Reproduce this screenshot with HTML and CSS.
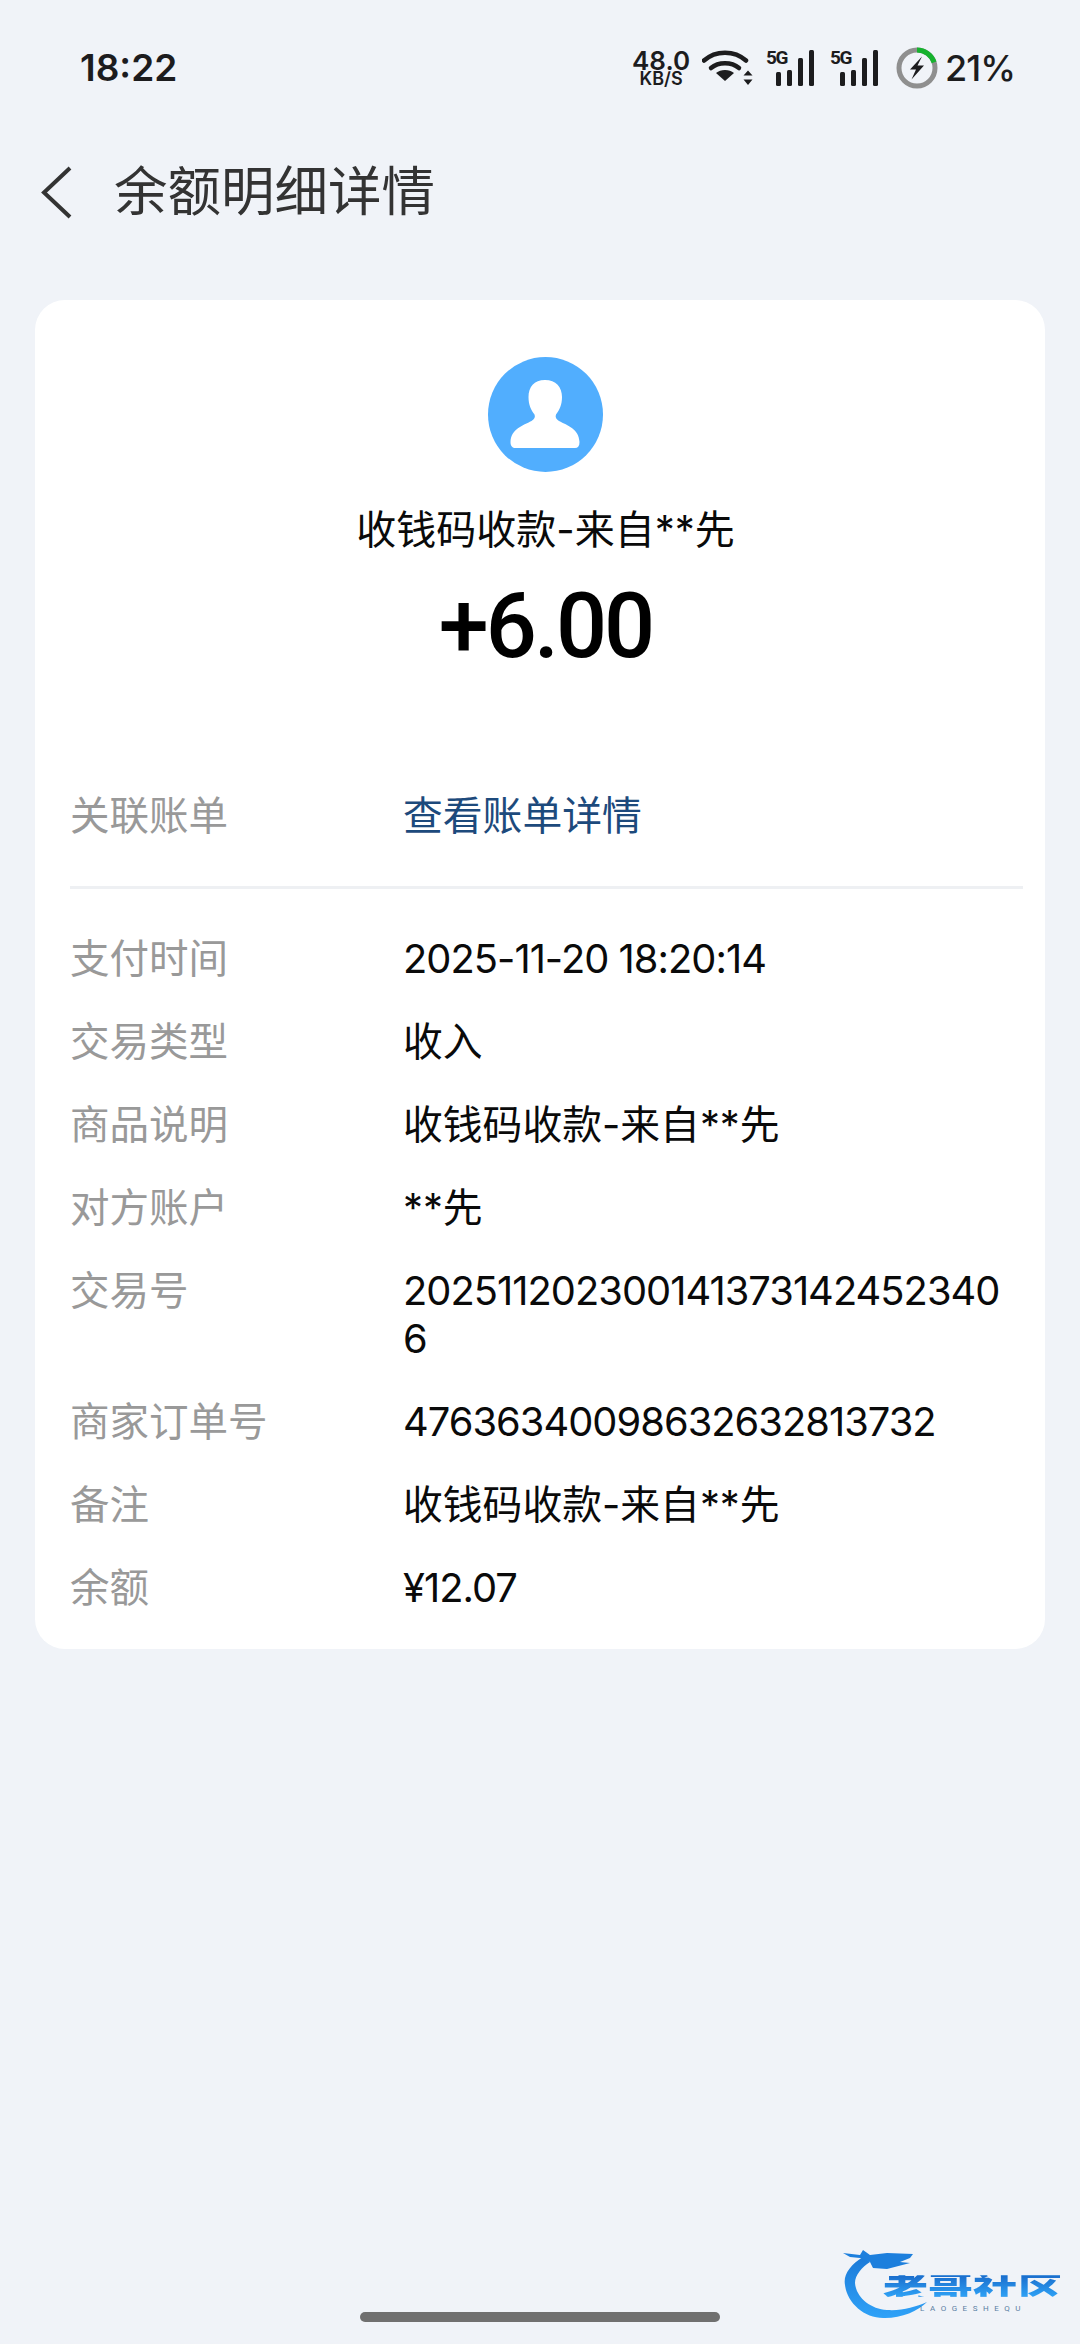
FILE: index.html
```html
<!DOCTYPE html>
<html lang="zh-CN">
<head>
<meta charset="utf-8">
<title>余额明细详情</title>
<link rel="stylesheet" href="styles.css">
</head>
<body>
<div class="page">
  <header class="status">
    <span class="time">18:22</span>
    <div class="status-right">
      <div class="speed"><span class="speed-num">48.0</span><span class="speed-unit">KB/S</span></div>
      <svg class="wifi" width="52" height="38" viewBox="0 0 52 38">
        <path d="M2 11.500C13.500 1 32.500 1 44 11.500" fill="none" stroke="#1c1c1e" stroke-width="4.500" stroke-linecap="round"/>
        <path d="M9 19C16.500 12.500 29.500 12.500 37 19" fill="none" stroke="#1c1c1e" stroke-width="4.500" stroke-linecap="round"/>
        <path d="M23 21C26.500 21 29.500 22 32 24L23 32L14 24C16.500 22 19.500 21 23 21Z" fill="#1c1c1e"/>
        <path d="M46 21.500L50.500 26.500H41.500ZM46 36L41.500 30.500H50.500Z" fill="#1c1c1e"/>
      </svg>
      <div class="signal">
        <span class="net">5G</span>
        <span class="bar bar1"></span><span class="bar bar2"></span><span class="bar bar3"></span><span class="bar bar4"></span>
      </div>
      <div class="signal">
        <span class="net">5G</span>
        <span class="bar bar1"></span><span class="bar bar2"></span><span class="bar bar3"></span><span class="bar bar4"></span>
      </div>
      <svg class="battery" width="42" height="42" viewBox="0 0 42 42">
        <circle cx="21" cy="21" r="18" fill="none" stroke="#8f8f8f" stroke-width="5"/>
        <path d="M21 3A18 18 0 0 1 38.100 15.400" fill="none" stroke="#16b22e" stroke-width="5"/>
        <path d="M26 9.500L14 22.500H20L15.500 32.500L28 18.500H21.500Z" fill="#1c1c1e"/>
      </svg>
      <span class="pct">21%</span>
    </div>
  </header>

  <nav class="nav">
    <svg class="back" width="31" height="53" viewBox="0 0 31 53">
      <path d="M29 2L3 26.500L29 51" fill="none" stroke="#333" stroke-width="4"/>
    </svg>
    <h1 class="nav-title">余额明细详情</h1>
  </nav>

  <main class="card">
    <section class="summary">
      <svg class="avatar" width="115" height="115" viewBox="0 0 115 115">
        <circle cx="57.500" cy="57.500" r="57.500" fill="#51aefe"/>
        <path d="M57 23C46 23 40.500 30 40.500 40C40.500 48 43 53 46.500 57.500C47.500 60 46.500 62 43.500 64C35 68.500 23 72 22.500 85C22.500 89 24.500 91 27.500 91H87C90 91 91.500 89 91.500 85C91 72 79.500 68.500 71 64C68 62 67 60 68 57.500C71.500 53 74 48 74 40C74 30 68 23 57 23Z" fill="#fff"/>
      </svg>
      <div class="summary-title">收钱码收款-来自**先</div>
      <div class="amount">+6.00</div>
    </section>

    <div class="row row-link">
      <span class="label">关联账单</span>
      <a class="value link">查看账单详情</a>
    </div>
    <hr class="divider">
    <div class="rows">
      <div class="row"><span class="label">支付时间</span><span class="value num">2025-11-20 18:20:14</span></div>
      <div class="row"><span class="label">交易类型</span><span class="value">收入</span></div>
      <div class="row"><span class="label">商品说明</span><span class="value">收钱码收款-来自**先</span></div>
      <div class="row"><span class="label">对方账户</span><span class="value">**先</span></div>
      <div class="row"><span class="label">交易号</span><span class="value num">2025112023001413731424523406</span></div>
      <div class="row"><span class="label">商家订单号</span><span class="value num">47636340098632632813732</span></div>
      <div class="row"><span class="label">备注</span><span class="value">收钱码收款-来自**先</span></div>
      <div class="row"><span class="label">余额</span><span class="value num">¥12.07</span></div>
    </div>
  </main>
</div>

<div class="watermark">
  <svg class="dragon" width="90" height="80" viewBox="0 0 90 80">
    <defs>
      <linearGradient id="dg" x1="0" y1="0" x2="0" y2="1">
        <stop offset="0" stop-color="#1c7ad8"/>
        <stop offset="1" stop-color="#2fa2f8"/>
      </linearGradient>
    </defs>
    <path d="M23 12C10 20 3 30 5 40C7 58 25 74 45 73C62 73 78 66 87 57C75 62 62 66 47 65C30 64 16 52 15 38C15 30 22 22 30 17Z" fill="url(#dg)"/>
    <path d="M3 8L20 10L23 5L30 10L47 8L73 9L70 13L60 17L70 18L47 24L33 23L30 17L20 13L10 12Z" fill="#1d7fdd"/>
  </svg>
  <div class="wm-text">
    <span class="wm-name">老哥社区</span>
    <span class="wm-sub">LAOGESHEQU</span>
  </div>
</div>
<div class="home-bar"></div>
</body>
</html>
```
FILE: styles.css
```css
* { box-sizing: border-box; }
html, body { margin: 0; padding: 0; }
body {
  width: 1080px;
  height: 2344px;
  background: #f0f3f8;
  font-family: "Inter", "Noto Sans CJK SC", sans-serif;
  position: relative;
  overflow: hidden;
}
.page { display: flex; flex-direction: column; }

.status {
  height: 136px;
  padding: 46px 65px 0 80px;
  display: flex;
  justify-content: space-between;
  align-items: flex-start;
  color: #1c1c1e;
}
.time { font-size: 37px; font-weight: 600; line-height: 44px; }
.status-right { display: flex; align-items: center; height: 44px; }
.speed { display: flex; flex-direction: column; align-items: center; width: 58px; font-weight: 600; }
.speed-num { font-size: 26px; line-height: 21px; }
.speed-unit { font-size: 18px; line-height: 15px; }
.wifi { margin-left: 12px; }
.signal { position: relative; width: 48px; height: 36px; margin-left: 12px; display: flex; align-items: flex-end; justify-content: flex-end; gap: 6px; }
.signal + .signal { margin-left: 16px; }
.net { position: absolute; left: 0; top: -1px; font-size: 19px; line-height: 18px; font-weight: 700; letter-spacing: -1.5px; font-family: "Roboto", sans-serif; }
.bar { width: 5px; background: #1c1c1e; border-radius: 1.500px; }
.bar1 { height: 14px; margin-left: 10px; }
.bar2 { height: 16px; }
.bar3 { height: 28px; }
.bar4 { height: 36px; }
.battery { margin-left: 18px; }
.pct { font-size: 36px; font-weight: 500; margin-left: 7px; line-height: 44px; letter-spacing: -1px; }

.nav {
  height: 112px;
  padding-left: 41px;
  display: flex;
  align-items: center;
  gap: 42px;
}
.back { flex: none; }
.nav-title { margin: 0; font-size: 53.500px; font-weight: 400; color: #333; line-height: 70px; }

.card {
  margin: 52px 35px 0;
  width: 1010px;
  height: 1349px;
  background: #fff;
  border-radius: 30px;
  padding: 57px 22px 0 35px;
}
.summary { display: flex; flex-direction: column; align-items: center; padding-right: 2px; }
.avatar { display: block; }
.summary-title { margin-top: 32px; font-size: 40px; line-height: 52px; color: #0a0a0a; }
.amount { margin-top: 19px; font-family: "Roboto", sans-serif; font-size: 90px; line-height: 104px; font-weight: 500; letter-spacing: -3px; color: #000; }

.row { display: flex; align-items: flex-start; font-size: 39.500px; line-height: 48px; }
.row-link { margin-top: 113px; }
.label { width: 333px; flex: none; color: #999; }
.value { color: #0a0a0a; font-size: 39.800px; word-break: break-all; max-width: 608px; }
.num { letter-spacing: -0.950px; }
.link { color: #1d4a7c; }
.divider { margin: 46px 0 0; border: 0; height: 3px; background: #eef0f3; }
.rows { display: flex; flex-direction: column; gap: 35px; margin-top: 46px; }

.watermark {
  position: absolute;
  left: 840px;
  top: 2245px;
  width: 230px;
  height: 80px;
}
.dragon { display: block; }
.wm-text { position: absolute; left: 42px; top: 26px; width: 182px; display: flex; flex-direction: column; align-items: center; }
.wm-name {
  font-size: 45px;
  line-height: 30px;
  font-weight: 900;
  white-space: nowrap;
  font-family: "Noto Sans CJK SC", sans-serif;
  transform: scaleY(0.72);
  background: linear-gradient(#1a6ccb, #2ea2f6);
  -webkit-background-clip: text;
  background-clip: text;
  color: transparent;
}
.wm-sub { margin-top: 3px; font-family: "Roboto", sans-serif; font-size: 8px; line-height: 9px; letter-spacing: 5.500px; color: #5b7fa3; }

.home-bar {
  position: absolute;
  left: 360px;
  top: 2312px;
  width: 360px;
  height: 10px;
  border-radius: 5px;
  background: #707070;
}
```
